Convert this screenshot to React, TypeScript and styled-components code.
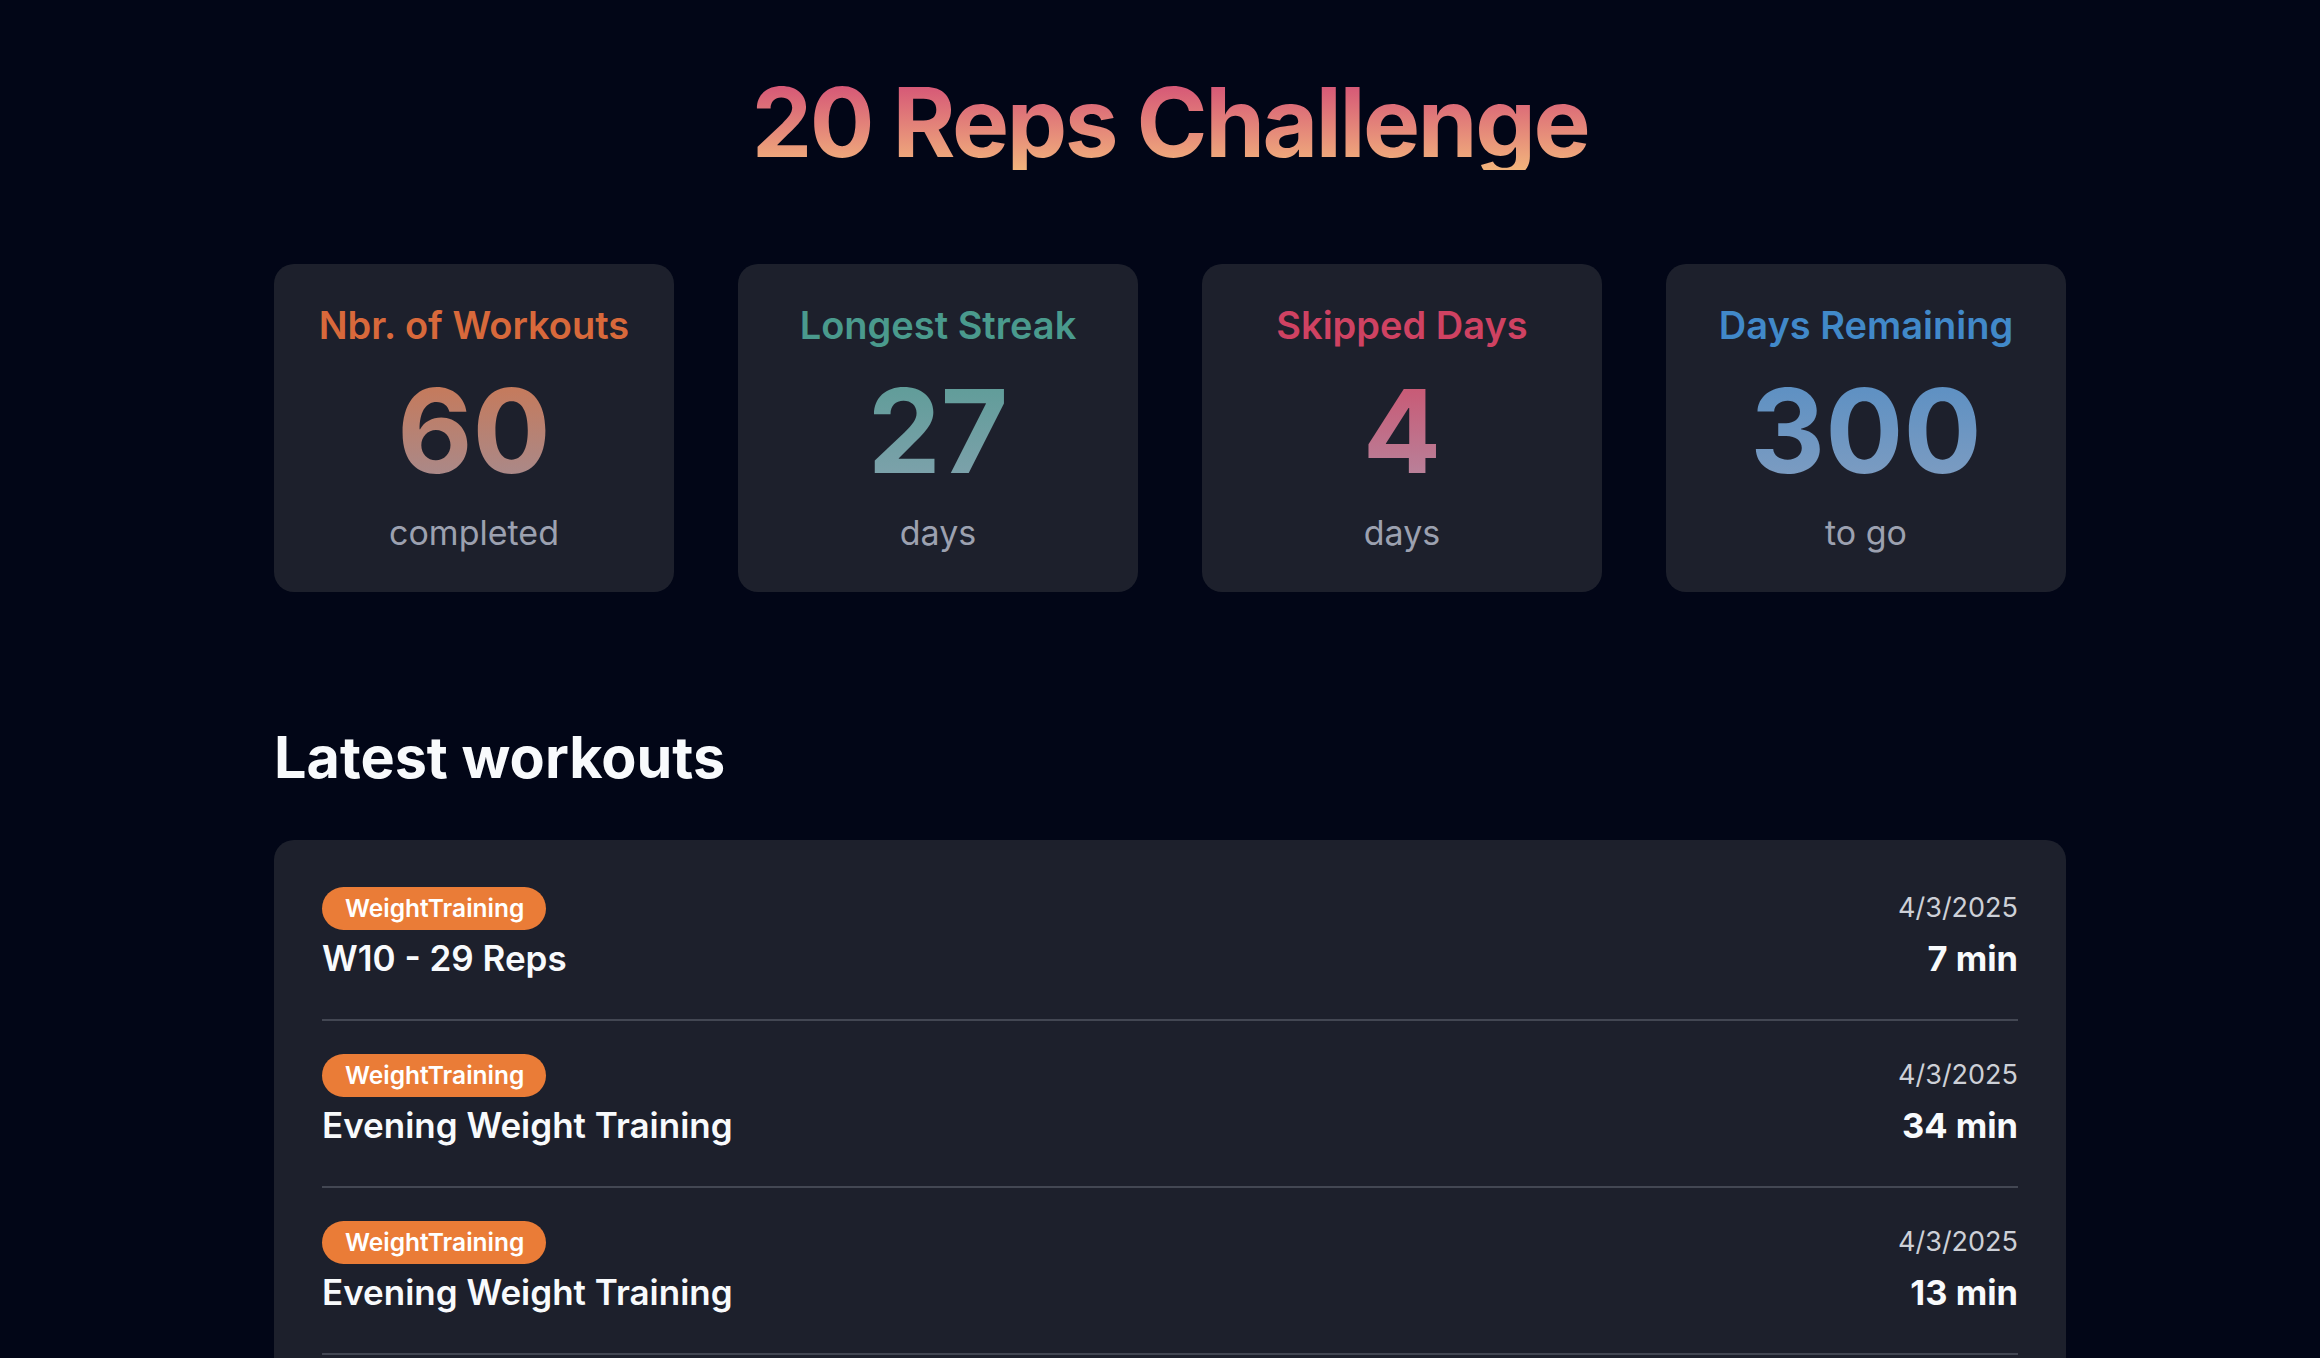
import React from "react";
import styled, { createGlobalStyle } from "styled-components";

const GlobalStyle = createGlobalStyle`
  body {
    margin: 0;
    background-color: #020617;
    font-family: Inter, "Noto Sans", sans-serif;
    color: #f8fafc;
  }
`;

const Page = styled.div`
  padding: 0 0 0 20px;
`;

const Main = styled.main`
  max-width: 1792px;
  margin: 0 auto;
`;

const Title = styled.h1`
  margin: 74px 0 94px;
  font-size: 96px;
  line-height: 1;
  font-weight: 700;
  letter-spacing: -2.4px;
  text-align: center;
  background: linear-gradient(to bottom, #d24b76, #f2b47c);
  -webkit-background-clip: text;
  background-clip: text;
  color: transparent;
`;

const StatsGrid = styled.div`
  display: grid;
  grid-template-columns: repeat(4, 400px);
  gap: 64px;
`;

const StatCard = styled.div`
  background-color: #1d202c;
  border-radius: 20px;
  padding: 38px 0 37px;
  display: flex;
  flex-direction: column;
  align-items: center;
`;

const StatLabel = styled.div<{ $color: string }>`
  font-size: 38px;
  line-height: 46px;
  font-weight: 600;
  color: ${(p) => p.$color};
`;

const StatValue = styled.div<{ $from: string; $to: string }>`
  margin-top: 25px;
  font-size: 116px;
  line-height: 116px;
  font-weight: 700;
  background: linear-gradient(to bottom, ${(p) => p.$from}, ${(p) => p.$to});
  -webkit-background-clip: text;
  background-clip: text;
  color: transparent;
`;

const StatSub = styled.div`
  margin-top: 22px;
  font-size: 34px;
  line-height: 44px;
  color: #9ca1b0;
`;

const SectionTitle = styled.h2`
  margin: 130px 0 48px;
  font-size: 57.5px;
  line-height: 70px;
  font-weight: 700;
  color: #f8fafc;
`;

const ListCard = styled.div`
  background-color: #1d202c;
  border-radius: 20px;
  padding: 14px 48px 0 48px;
`;

const Row = styled.div`
  display: flex;
  justify-content: space-between;
  align-items: flex-start;
  padding: 33px 0 34px;
  border-bottom: 2px solid #434753;
`;

const RowMain = styled.div`
  display: flex;
  flex-direction: column;
  align-items: flex-start;
`;

const Badge = styled.span`
  display: inline-block;
  height: 43px;
  line-height: 43px;
  padding: 0 22px 0 23px;
  border-radius: 22px;
  background-color: #ea7c37;
  color: #fff;
  font-size: 24.5px;
  font-weight: 600;
`;

const WorkoutName = styled.div`
  margin-top: 3px;
  font-size: 35px;
  line-height: 51px;
  font-weight: 600;
  color: #f8fafc;
`;

const RowMeta = styled.div`
  display: flex;
  flex-direction: column;
  align-items: flex-end;
`;

const DateText = styled.div`
  margin-top: 1px;
  font-size: 27px;
  line-height: 39px;
  color: #cdd0d7;
`;

const Duration = styled.div`
  margin-top: 6px;
  font-size: 34.5px;
  line-height: 52px;
  font-weight: 700;
  color: #f8fafc;
`;

const stats = [
  { label: "Nbr. of Workouts", value: "60", sub: "completed", color: "#d8693b", from: "#c97855", to: "#a68b8f" },
  { label: "Longest Streak", value: "27", sub: "days", color: "#4a9a8d", from: "#5d9c97", to: "#80a2ad" },
  { label: "Skipped Days", value: "4", sub: "days", color: "#cf4262", from: "#cb5470", to: "#b6879f" },
  { label: "Days Remaining", value: "300", sub: "to go", color: "#4189c9", from: "#5a8fc3", to: "#7f9dc1" },
];

const workouts = [
  { type: "WeightTraining", name: "W10 - 29 Reps", date: "4/3/2025", duration: "7 min" },
  { type: "WeightTraining", name: "Evening Weight Training", date: "4/3/2025", duration: "34 min" },
  { type: "WeightTraining", name: "Evening Weight Training", date: "4/3/2025", duration: "13 min" },
  { type: "WeightTraining", name: "Evening Weight Training", date: "4/2/2025", duration: "21 min" },
];

export default function App() {
  return (
    <Page>
      <GlobalStyle />
      <Main>
        <Title>20 Reps Challenge</Title>
        <StatsGrid>
          {stats.map((s) => (
            <StatCard key={s.label}>
              <StatLabel $color={s.color}>{s.label}</StatLabel>
              <StatValue $from={s.from} $to={s.to}>
                {s.value}
              </StatValue>
              <StatSub>{s.sub}</StatSub>
            </StatCard>
          ))}
        </StatsGrid>
        <SectionTitle>Latest workouts</SectionTitle>
        <ListCard>
          {workouts.map((w, i) => (
            <Row key={i}>
              <RowMain>
                <Badge>{w.type}</Badge>
                <WorkoutName>{w.name}</WorkoutName>
              </RowMain>
              <RowMeta>
                <DateText>{w.date}</DateText>
                <Duration>{w.duration}</Duration>
              </RowMeta>
            </Row>
          ))}
        </ListCard>
      </Main>
    </Page>
  );
}
